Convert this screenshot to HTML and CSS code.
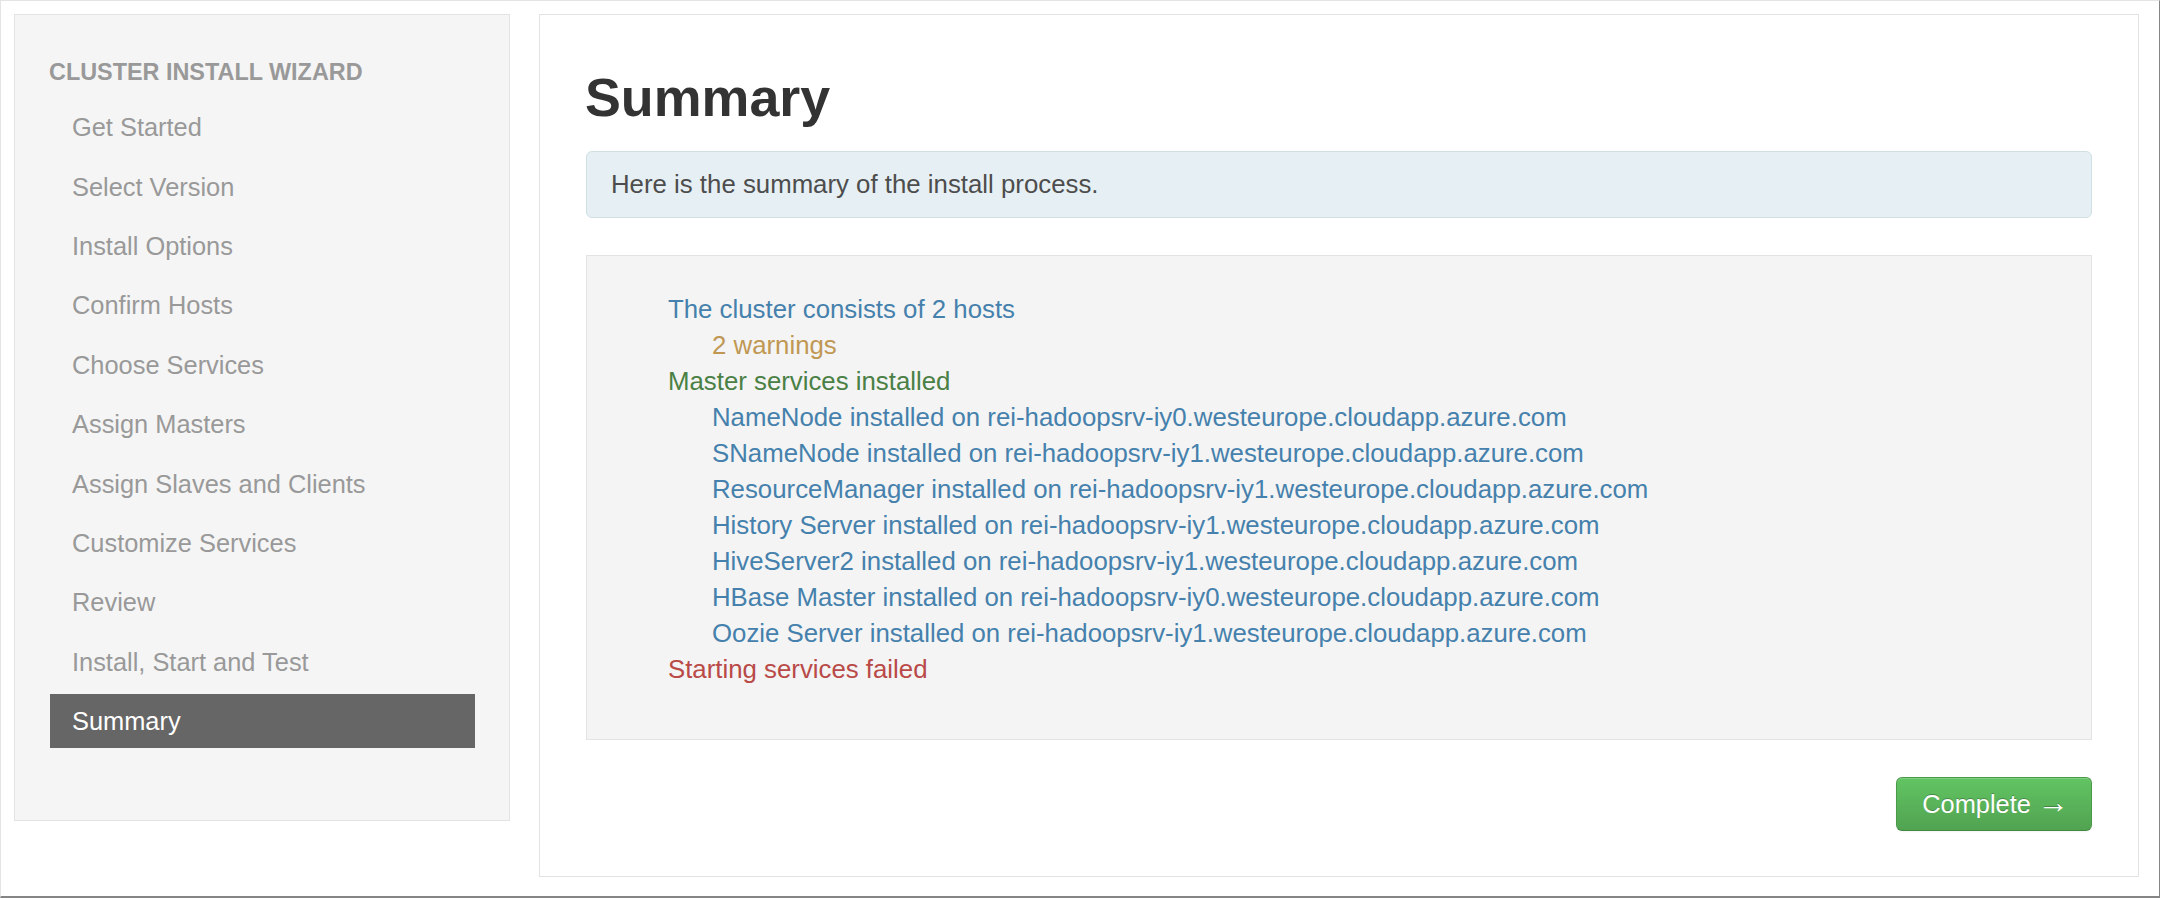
FILE: index.html
```html
<!DOCTYPE html>
<html lang="en">
<head>
<meta charset="utf-8">
<title>Cluster Install Wizard - Summary</title>
<link rel="stylesheet" href="styles.css">
</head>
<body>
<div class="frame">
  <aside class="sidebar">
    <div class="nav-header">CLUSTER INSTALL WIZARD</div>
    <ul class="nav">
      <li class="nav-item">Get Started</li>
      <li class="nav-item">Select Version</li>
      <li class="nav-item">Install Options</li>
      <li class="nav-item">Confirm Hosts</li>
      <li class="nav-item">Choose Services</li>
      <li class="nav-item">Assign Masters</li>
      <li class="nav-item">Assign Slaves and Clients</li>
      <li class="nav-item">Customize Services</li>
      <li class="nav-item">Review</li>
      <li class="nav-item">Install, Start and Test</li>
      <li class="nav-item active">Summary</li>
    </ul>
  </aside>
  <main class="panel">
    <h1 class="title">Summary</h1>
    <div class="alert">Here is the summary of the install process.</div>
    <div class="well">
      <ul class="summary">
        <li class="line info">The cluster consists of 2 hosts</li>
        <li class="line sub warning">2 warnings</li>
        <li class="line success">Master services installed</li>
        <li class="line sub info">NameNode installed on rei-hadoopsrv-iy0.westeurope.cloudapp.azure.com</li>
        <li class="line sub info">SNameNode installed on rei-hadoopsrv-iy1.westeurope.cloudapp.azure.com</li>
        <li class="line sub info">ResourceManager installed on rei-hadoopsrv-iy1.westeurope.cloudapp.azure.com</li>
        <li class="line sub info">History Server installed on rei-hadoopsrv-iy1.westeurope.cloudapp.azure.com</li>
        <li class="line sub info">HiveServer2 installed on rei-hadoopsrv-iy1.westeurope.cloudapp.azure.com</li>
        <li class="line sub info">HBase Master installed on rei-hadoopsrv-iy0.westeurope.cloudapp.azure.com</li>
        <li class="line sub info">Oozie Server installed on rei-hadoopsrv-iy1.westeurope.cloudapp.azure.com</li>
        <li class="line error">Starting services failed</li>
      </ul>
    </div>
    <div class="actions">
      <button class="btn-success" type="button">Complete <span class="arrow">&rarr;</span></button>
    </div>
  </main>
</div>
</body>
</html>
```

FILE: styles.css
```css
* { box-sizing: border-box; }

html, body {
  margin: 0;
  padding: 0;
  background: #ffffff;
  font-family: "Liberation Sans", Arial, Helvetica, sans-serif;
}

.frame {
  width: 2160px;
  height: 898px;
  display: flex;
  align-items: flex-start;
  padding: 13px 0 0 13px;
  border-top: 1px solid #e4e4e4;
  border-left: 1px solid #e4e4e4;
  border-right: 1px solid #858585;
  border-bottom: 2px solid #858585;
  overflow: hidden;
}

/* Sidebar */
.sidebar {
  flex: none;
  width: 496px;
  background: #f5f5f5;
  border: 1px solid #e3e3e3;
  padding: 39.4px 34px 71.7px 35px;
}

.nav-header {
  font-size: 23.4px;
  line-height: 36px;
  font-weight: bold;
  color: #999999;
  margin: 0 0 9.9px -1px;
  white-space: nowrap;
}

.nav {
  list-style: none;
  margin: 0;
  padding: 0;
  display: flex;
  flex-direction: column;
  gap: 5.4px;
}

.nav-item {
  font-size: 25.4px;
  line-height: 30px;
  padding: 12px 22px;
  color: #999999;
  white-space: nowrap;
}

.nav-item.active {
  background: #666666;
  color: #ffffff;
}

/* Main panel */
.panel {
  flex: none;
  width: 1600.4px;
  margin-left: 28.6px;
  background: #ffffff;
  border: 1px solid #e3e3e3;
  padding: 51.6px 46px 45.3px 46.4px;
}

.title {
  margin: 0 0 24.1px -1px;
  font-size: 53.8px;
  line-height: 60px;
  font-weight: bold;
  color: #333333;
}

.alert {
  background: #e6f0f4;
  border: 1px solid #cfdfe4;
  border-radius: 6px;
  padding: 14.8px 24px;
  font-size: 25.8px;
  line-height: 36px;
  color: #4d4d4d;
  margin-bottom: 36.7px;
}

.well {
  background: #f4f4f4;
  border: 1px solid #e3e3e3;
  padding: 34.6px 24px 52.4px 81px;
}

.summary {
  list-style: none;
  margin: 0;
  padding: 0;
}

.line {
  font-size: 25.8px;
  line-height: 36px;
  white-space: nowrap;
}

.line.sub { padding-left: 44px; }

.info { color: #4581ac; }
.warning { color: #c09853; }
.success { color: #4a8045; }
.error { color: #b94a48; }

.actions {
  display: flex;
  justify-content: flex-end;
  margin-top: 37.3px;
}

.btn-success {
  font-family: "Liberation Sans", Arial, Helvetica, sans-serif;
  font-size: 25.4px;
  line-height: 30px;
  padding: 10.7px 22px 10.7px 25px;
  color: #ffffff;
  text-shadow: 0 -1px 0 rgba(0, 0, 0, 0.25);
  background: linear-gradient(to bottom, #62c462, #51a351);
  border: 1px solid #4a9a4a;
  border-bottom-color: #3f8a3f;
  border-radius: 6px;
  box-shadow: inset 0 1px 0 rgba(255, 255, 255, 0.2), 0 1px 2px rgba(0, 0, 0, 0.05);
  cursor: pointer;
}

.arrow {
  font-family: "Liberation Sans", Arial, sans-serif;
  font-size: 31px;
  line-height: 20px;
}
```
